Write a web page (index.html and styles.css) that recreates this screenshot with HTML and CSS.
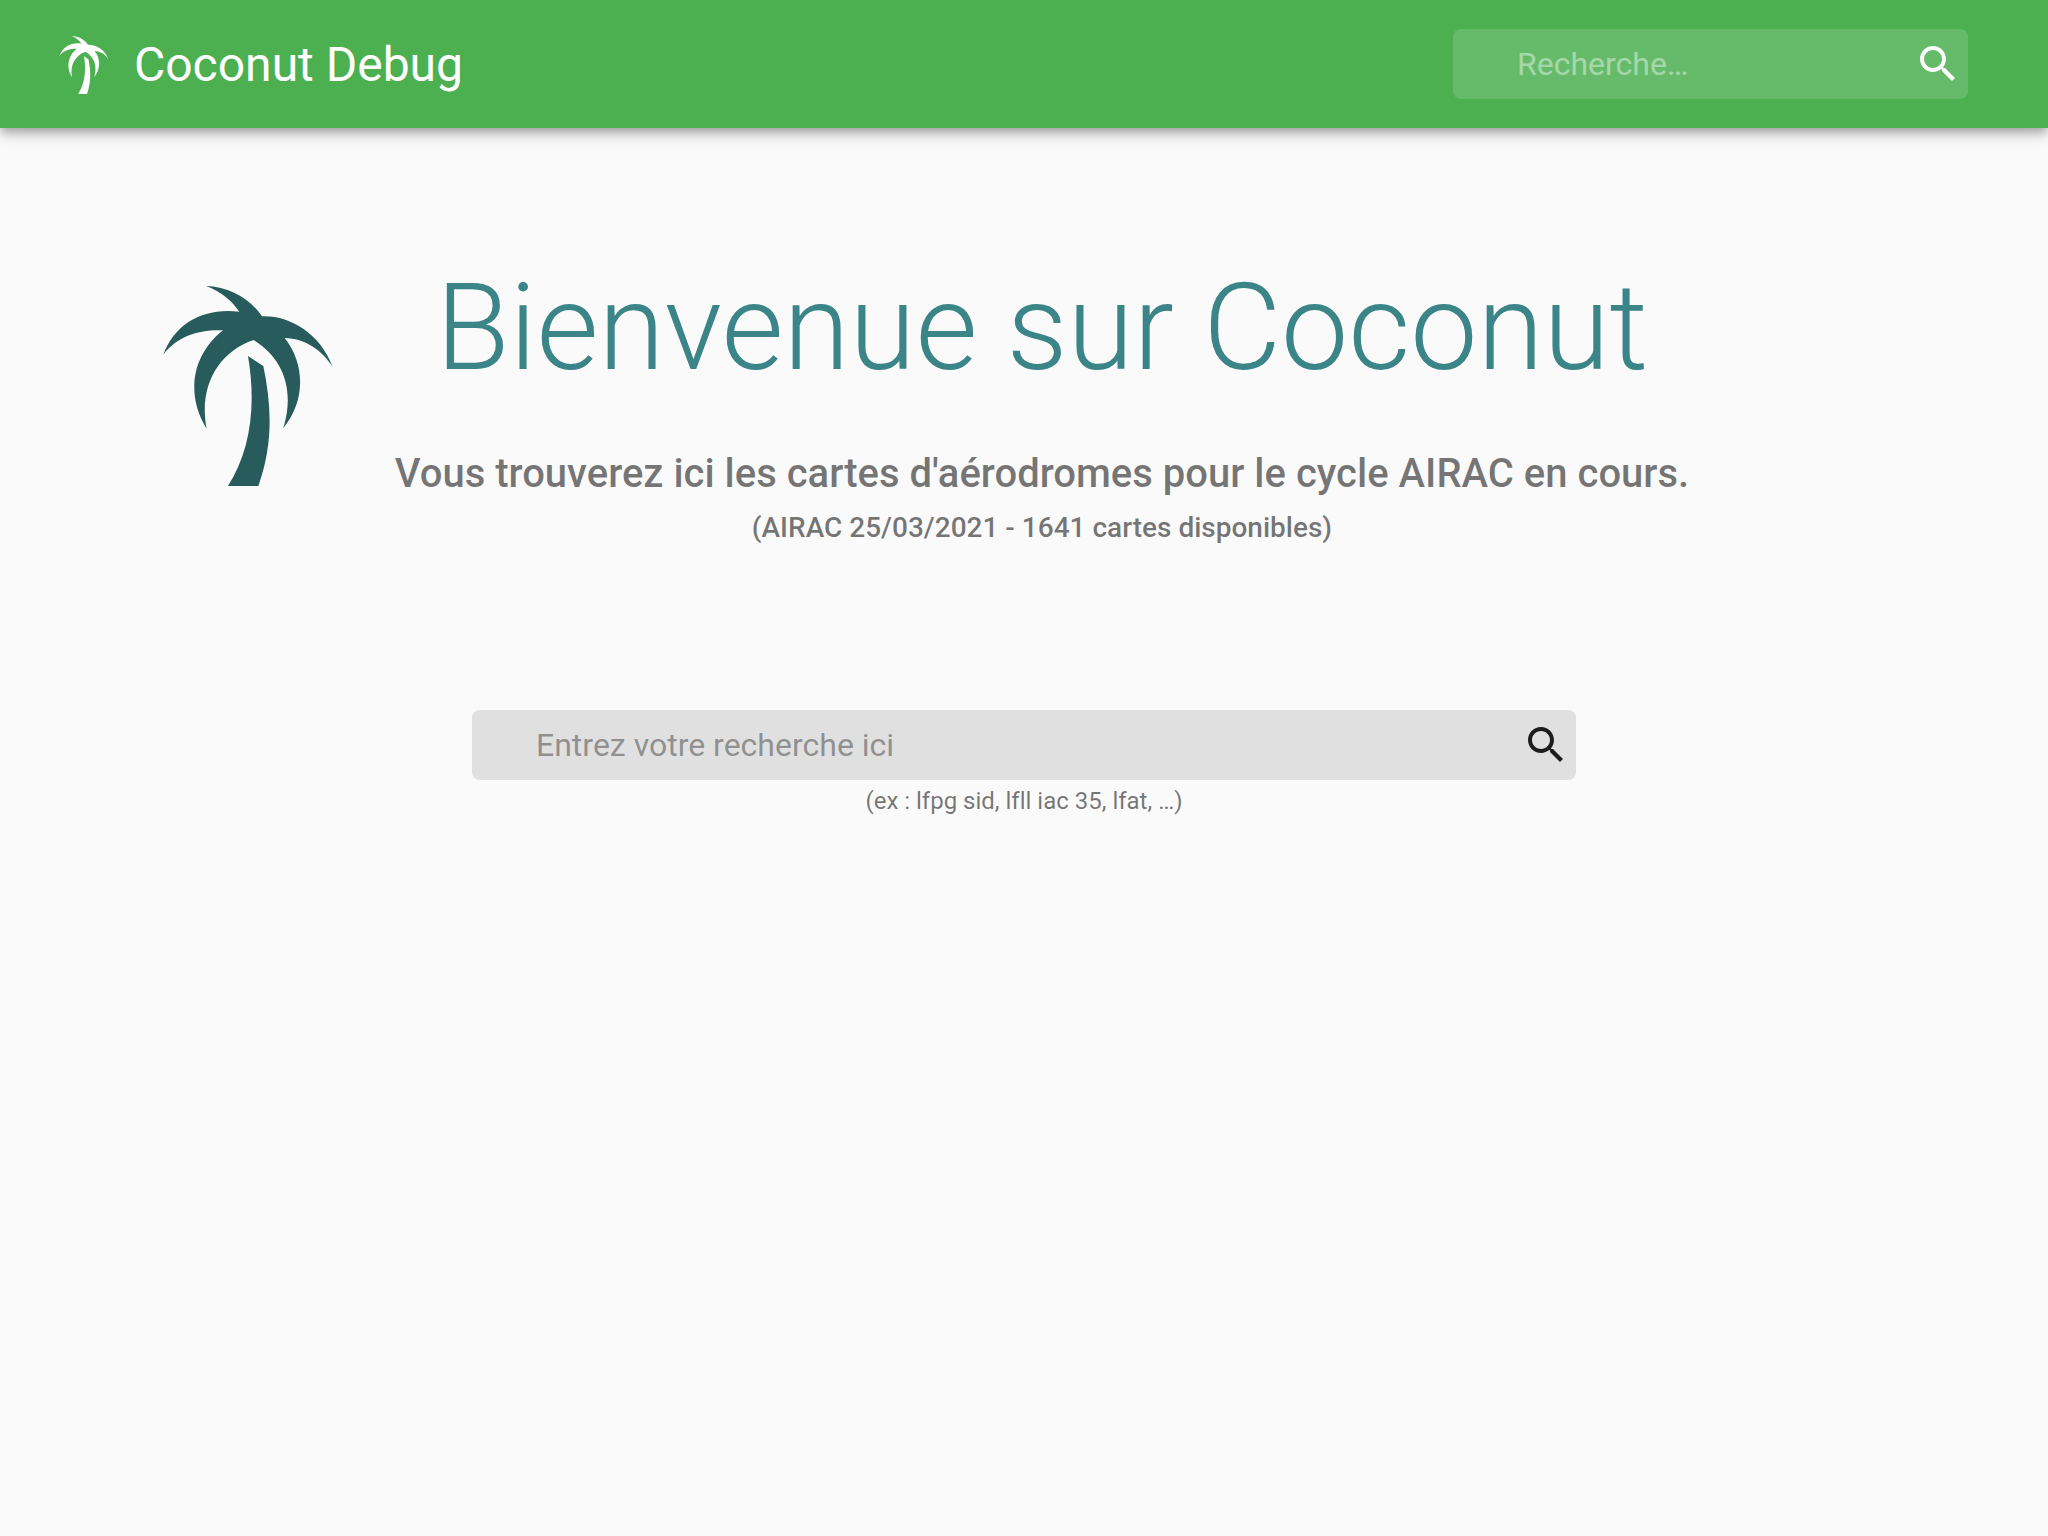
FILE: index.html
```html
<!DOCTYPE html>
<html lang="fr">
<head>
  <meta charset="utf-8">
  <meta name="viewport" content="width=device-width, initial-scale=1">
  <title>Coconut Debug</title>
  <link rel="stylesheet" href="styles.css">
</head>
<body>
  <svg class="sprite" aria-hidden="true">
    <symbol id="palm" viewBox="60 48 528 600">
      <path d="M198 48C270 50 332 88 366 139C450 136 540 190 578 290C545 240 495 205 434 204C498 285 495 395 430 474C465 360 430 265 341 210C235 245 175 350 200 476C140 380 150 260 249 181C175 178 110 200 70 254C105 160 190 112 298 125C275 92 245 66 198 48Z"/>
      <path d="M324 258L370 288C395 410 400 520 355 648H264C330 545 350 410 324 258Z"/>
    </symbol>
    <symbol id="magnifier" viewBox="0 0 24 24">
      <path d="M15.5 14h-.79l-.28-.27C15.41 12.59 16 11.11 16 9.5 16 5.91 13.09 3 9.5 3S3 5.91 3 9.5 5.91 16 9.5 16c1.61 0 3.09-.59 4.23-1.57l.27.28v.79l5 4.99L20.49 19l-4.99-5zm-6 0C7.01 14 5 11.99 5 9.5S7.01 5 9.5 5 14 7.01 14 9.5 11.99 14 9.5 14z"/>
    </symbol>
  </svg>

  <header class="app-bar">
    <a class="brand" href="#">
      <svg class="brand-icon" aria-hidden="true"><use href="#palm"/></svg>
      <span>Coconut Debug</span>
    </a>
    <form class="search search-bar" role="search">
      <input class="search-input" type="text" aria-label="Recherche" placeholder="Recherche…">
      <button class="search-button" type="submit" aria-label="Rechercher">
        <svg class="search-icon" aria-hidden="true"><use href="#magnifier"/></svg>
      </button>
    </form>
  </header>

  <main class="content">
    <section class="hero">
      <svg class="hero-icon" aria-hidden="true"><use href="#palm"/></svg>
      <div class="hero-text">
        <h1 class="title">Bienvenue sur Coconut</h1>
        <p class="subtitle">Vous trouverez ici les cartes d'aérodromes pour le cycle AIRAC en cours.</p>
        <p class="cycle">(AIRAC 25/03/2021 - 1641 cartes disponibles)</p>
      </div>
    </section>

    <section class="finder">
      <form class="search search-main" role="search">
        <input class="search-input" type="text" aria-label="Entrez votre recherche ici" aria-describedby="hint" placeholder="Entrez votre recherche ici">
        <button class="search-button" type="submit" aria-label="Rechercher">
          <svg class="search-icon" aria-hidden="true"><use href="#magnifier"/></svg>
        </button>
      </form>
      <p class="hint" id="hint">(ex : lfpg sid, lfll iac 35, lfat, …)</p>
    </section>
  </main>
</body>
</html>
```
FILE: styles.css
```css
* {
  box-sizing: border-box;
}

body {
  margin: 0;
  background: #fafafa;
  color: rgba(0, 0, 0, 0.87);
  font-family: Roboto, "Liberation Sans", sans-serif;
}

h1,
p {
  margin: 0;
}

.sprite {
  display: none;
}

/* App bar */
.app-bar {
  display: flex;
  align-items: center;
  justify-content: space-between;
  gap: 24px;
  min-height: 128px;
  padding: 0 80px 0 58px;
  background: #4caf50;
  color: #fff;
  box-shadow:
    0 4px 8px -2px rgba(0, 0, 0, 0.2),
    0 8px 10px 0 rgba(0, 0, 0, 0.14),
    0 2px 20px 0 rgba(0, 0, 0, 0.12);
}

.brand {
  display: flex;
  align-items: center;
  gap: 24px;
  padding-top: 2px;
  color: inherit;
  font-size: 48px;
  line-height: 64px;
  text-decoration: none;
}

.brand-icon {
  width: 52px;
  height: 58px;
  fill: currentColor;
}

/* Search fields */
.search {
  display: flex;
  align-items: center;
  padding: 0 6px 0 64px;
  border-radius: 8px;
}

.search-bar {
  width: 515px;
  background: rgba(255, 255, 255, 0.15);
}

.search-main {
  width: 100%;
  background: #e0e0e0;
}

.search-input {
  flex: 1;
  min-width: 0;
  height: 70px;
  padding: 0;
  border: 0;
  outline: 0;
  background: none;
  color: inherit;
  font: inherit;
  font-size: 32px;
}

.search-input::placeholder {
  color: inherit;
  opacity: 0.42;
}

.search-button {
  display: flex;
  padding: 0;
  border: 0;
  background: none;
  color: inherit;
  cursor: pointer;
}

.search-icon {
  width: 48px;
  height: 48px;
  fill: currentColor;
}

/* Welcome section */
.content {
  padding-top: 128px;
}

.hero {
  display: flex;
  align-items: flex-start;
  padding: 0 300px 0 160px;
}

.hero-icon {
  flex: none;
  width: 176px;
  height: 200px;
  margin-top: 30px;
  fill: #285b5c;
}

.hero-text {
  flex: 1;
  text-align: center;
}

.title {
  margin-bottom: 42px;
  color: #3b8488;
  font-size: 120px;
  font-weight: 300;
  line-height: 144px;
}

.subtitle,
.cycle,
.hint {
  color: rgba(0, 0, 0, 0.54);
}

.subtitle {
  font-size: 40px;
  font-weight: 500;
  line-height: 64px;
}

.cycle {
  font-size: 28px;
  font-weight: 500;
  line-height: 44px;
}

.finder {
  max-width: 1104px;
  margin: 160px auto 0;
}

.hint {
  font-size: 24px;
  font-variant-ligatures: none;
  line-height: 42px;
  text-align: center;
}

@media (max-width: 1400px) {
  .hero {
    flex-direction: column;
    align-items: center;
    padding: 0 32px;
  }

  .finder {
    padding: 0 32px;
  }
}
```
